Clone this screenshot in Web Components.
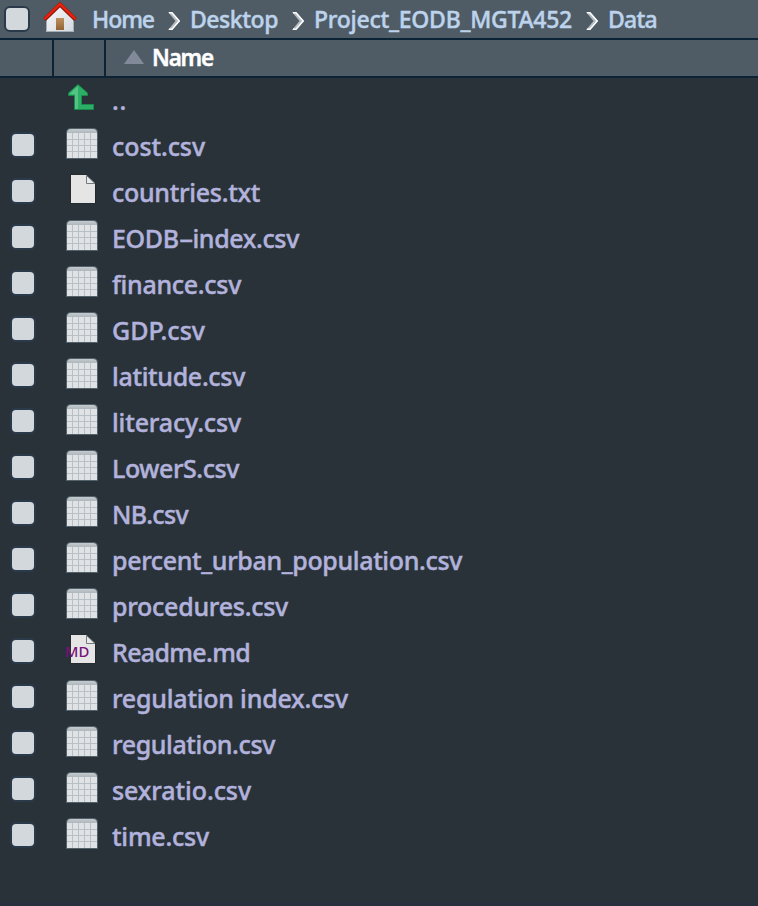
<!DOCTYPE html>
<html lang="en">
<head>
<meta charset="utf-8">
<title>Data</title>
<style>
html,body{margin:0;height:100%;background:#283238}
body{font-family:"Noto Sans","Open Sans",sans-serif;font-weight:500;overflow:hidden}
</style>
</head>
<body>
<file-browser></file-browser>
<script>
const define = (name, html, setup) => {
  const t = document.createElement('template');
  t.innerHTML = html;
  customElements.define(name, class extends HTMLElement {
    connectedCallback() {
      if (this.shadowRoot) return;
      this.attachShadow({mode: 'open'}).append(t.content.cloneNode(true));
      if (setup) setup(this, this.shadowRoot);
    }
  });
};

/* One line of text whose tracking is adjusted to fill the given width. */
define('fit-text', `<style>:host{display:block;white-space:pre;-webkit-text-stroke:.45px currentColor}span{display:inline-block}::slotted(i){display:inline-block;font-style:normal;margin:0 3px;transform:scaleX(1.8)}</style><span><slot></slot></span>`, (el, root) => {
  const s = root.querySelector('span');
  const target = +el.getAttribute('width');
  const natural = s.getBoundingClientRect().width;
  s.style.letterSpacing = ((target - natural) / el.textContent.length) + 'px';
  el.style.width = target + 'px';
});

define('check-box', `<style>:host{display:block;box-sizing:border-box;width:26px;height:26px;border:2px solid #2a3a4b;border-radius:6px;background:#d3d8dc;flex:none}</style>`);

define('file-icon', `<style>:host{display:block;width:34px;height:34px}svg{display:none;overflow:visible}
:host([kind=csv]) .csv,:host([kind=txt]) .doc,:host([kind=md]) .doc,:host([kind=up]) .up{display:block}
text{display:none}:host([kind=md]) text{display:inline}</style>
<svg class="csv" width="34" height="34"><defs><linearGradient id="g" x2="0" y2="1"><stop stop-color="#c5cacd"/><stop offset="1" stop-color="#afb7bd"/></linearGradient></defs>
<path d="M0 31V5Q0 0 5 0H27Q32 0 32 5V31Z" fill="#52616a"/><path d="M1 5Q1 1 5 1H27Q31 1 31 5Z" fill="url(#g)"/><path d="M1 5H31V30H1Z" fill="#e0e3e5"/>
<path d="M1 11.5H31M1 17.5H31M1 23.5H31M6.5 5V30M12.5 5V30M18.5 5V30M24.5 5V30" stroke="#b9c0c4"/></svg>
<svg class="doc" width="34" height="34"><path d="M4.5.5H21L30 9.5V29.5H4.5Z" fill="#20282d"/><path d="M5 1H20.5L29 9.5V29H5Z" fill="#e5e5e5"/><path d="M20.5 1.5V9.5H29Z" fill="#e9e9e9" stroke="#737b7e"/>
<text x="-1.2" y="23.3" textLength="24.5" lengthAdjust="spacingAndGlyphs" font-family="Noto Sans" font-size="15" font-weight="500" fill="#78117b">MD</text></svg>
<svg class="up" width="34" height="34"><path d="M2.5 10V9L12 .6 21.5 9V11.5H15.5V20.5H27.5V25.5H8.5V11.5H2.5Z" fill="#2cae67" stroke="#188b4c"/><path d="M3.5 10 12 2V25H9V10.5Z" fill="#54c486"/></svg>`);

define('file-row', `<style>:host{display:grid;grid-template-columns:66px 46px 1fr;height:46px;color:#b2b2dc;font-size:25px}
check-box{margin:8px 0 0 10px}file-icon{margin-top:4px}.name{line-height:34px;padding-top:5px}</style>
<div class="box"></div><file-icon></file-icon><div class="name"></div>`, (el, root) => {
  const kind = el.getAttribute('kind');
  if (kind !== 'up') root.querySelector('.box').append(document.createElement('check-box'));
  root.querySelector('file-icon').setAttribute('kind', kind);
  if (kind === 'up') root.querySelector('file-icon').style.marginTop = '6px';
  const f = document.createElement('fit-text');
  f.setAttribute('width', el.getAttribute('width'));
  f.innerHTML = el.getAttribute('name').replace('-', '<i>-</i>');
  root.querySelector('.name').append(f);
});

define('home-icon', `<style>:host{display:block;width:34px;height:32px}svg{display:block;overflow:visible}</style>
<svg width="34" height="32"><defs><linearGradient id="w" x2="1" y2="1"><stop stop-color="#fafafa"/><stop offset="1" stop-color="#d4d7de"/></linearGradient><linearGradient id="d" x2="0" y2="1"><stop stop-color="#bd905f"/><stop offset="1" stop-color="#936333"/></linearGradient></defs>
<path d="M2 17 16 3.5 30 17V31H2Z" fill="url(#w)"/><path d="M2.5 18V30.5H29.5V18" fill="none" stroke="#a3adb5"/><path d="M12 17H20V29H12Z" fill="url(#d)"/>
<path d="M.5 18.5 16 3.5 31.5 18.5" fill="none" stroke="#8e180d" stroke-width="4"/><path d="M.5 18 16 3 31.5 18" fill="none" stroke="#ee210b" stroke-width="2.4"/></svg>`);

define('crumb-arrow', `<style>:host{display:block;width:12px;height:18px}svg{display:block}</style>
<svg width="12" height="18"><path d="M0 0H4L12 9 4 18H0L7.5 9Z" fill="#b6bdc2"/><path d="M1 .8H4L11.2 9 4 17.2H1" fill="none" stroke="#fff" stroke-width="1.5"/></svg>`);

define('path-bar', `<style>:host{display:grid;grid-template-columns:44px 48px 75px 23px 101px 23px 271px 23px 1fr;height:38px;background:#4f5c66;color:#bdd3ec;font-size:23px;border-bottom:2px solid #0c2235}
check-box{margin:6px 0 0 4px}home-icon{margin-top:1px}fit-text{line-height:32px;padding-top:3px}crumb-arrow{margin:12px 0 0 1px}</style>
<check-box></check-box><home-icon></home-icon><fit-text width="62">Home</fit-text><crumb-arrow></crumb-arrow><fit-text width="88">Desktop</fit-text><crumb-arrow></crumb-arrow><fit-text width="258">Project_EODB_MGTA452</fit-text><crumb-arrow></crumb-arrow><fit-text width="49">Data</fit-text>`);

define('column-header', `<style>:host{display:grid;grid-template-columns:54px 52px 1fr;height:36px;background:#4f5c66;border-bottom:2px solid #0c2235;color:#fff;font-size:22.5px;font-weight:700}
.c{border-right:2px solid #0c2235}.n{display:flex;padding-left:18px}svg{margin-top:10px;width:20px;height:14px}fit-text{margin-left:8px;line-height:32px;padding-top:2px;font-weight:600}</style>
<div class="c"></div><div class="c"></div><div class="n"><svg><path d="M0 14 10 0 20 14Z" fill="#828a99"/></svg><fit-text width="61">Name</fit-text></div>`);

define('file-browser', `<style>:host{display:flex;flex-direction:column;height:100vh;background:#283238}.foot{margin-top:auto;height:3px;background:#27303c}</style>
<path-bar></path-bar><column-header></column-header><div class="rows"></div><div class="foot"></div>`, (el, root) => {
  const list = [['..','up',15],['cost.csv','csv',93],['countries.txt','txt',148],['EODB-index.csv','csv',187],['finance.csv','csv',129],['GDP.csv','csv',93],['latitude.csv','csv',133],['literacy.csv','csv',129],['LowerS.csv','csv',127],['NB.csv','csv',76],['percent_urban_population.csv','csv',350],['procedures.csv','csv',176],['Readme.md','md',138],['regulation index.csv','csv',236],['regulation.csv','csv',163],['sexratio.csv','csv',139],['time.csv','csv',97]];
  for (const [name, kind, width] of list) {
    const r = document.createElement('file-row');
    r.setAttribute('name', name); r.setAttribute('kind', kind); r.setAttribute('width', width);
    root.querySelector('.rows').append(r);
  }
});
</script>
</body>
</html>
